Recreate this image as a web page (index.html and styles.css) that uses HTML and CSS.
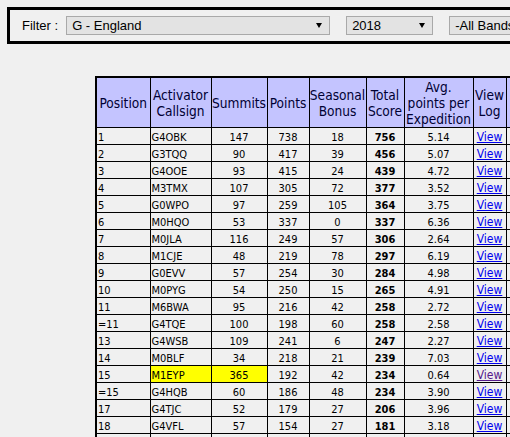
FILE: index.html
```html
<!DOCTYPE html>
<html>
<head>
<meta charset="utf-8">
<title>Activator Table</title>
<link rel="stylesheet" href="styles.css">
</head>
<body>
<div class="page">
  <div class="filter">
    <span class="filter-label">Filter :</span>
    <div class="select select-assoc"><span>G - England</span><svg class="arrow" width="6" height="5" viewBox="0 0 6 5"><path d="M0 0H6L3 5Z" fill="#000"/></svg></div>
    <div class="select select-year"><span>2018</span><svg class="arrow" width="6" height="5" viewBox="0 0 6 5"><path d="M0 0H6L3 5Z" fill="#000"/></svg></div>
    <div class="select select-band"><span>-All Bands-</span><svg class="arrow" width="6" height="5" viewBox="0 0 6 5"><path d="M0 0H6L3 5Z" fill="#000"/></svg></div>
  </div>

  <table class="league">
    <colgroup>
      <col class="c-pos"><col class="c-call"><col class="c-sum"><col class="c-pts"><col class="c-bonus"><col class="c-total"><col class="c-avg"><col class="c-view"><col class="c-extra">
    </colgroup>
    <thead>
      <tr>
        <th>Position</th>
        <th>Activator<br>Callsign</th>
        <th>Summits</th>
        <th>Points</th>
        <th>Seasonal<br>Bonus</th>
        <th>Total<br>Score</th>
        <th>Avg.<br>points per<br>Expedition</th>
        <th>View<br>Log</th>
        <th></th>
      </tr>
    </thead>
    <tbody>
      <tr><td class="l">1</td><td class="l">G4OBK</td><td>147</td><td>738</td><td>18</td><td class="b">756</td><td>5.14</td><td><a href="#">View</a></td><td></td></tr>
      <tr><td class="l">2</td><td class="l">G3TQQ</td><td>90</td><td>417</td><td>39</td><td class="b">456</td><td>5.07</td><td><a href="#">View</a></td><td></td></tr>
      <tr><td class="l">3</td><td class="l">G4OOE</td><td>93</td><td>415</td><td>24</td><td class="b">439</td><td>4.72</td><td><a href="#">View</a></td><td></td></tr>
      <tr><td class="l">4</td><td class="l">M3TMX</td><td>107</td><td>305</td><td>72</td><td class="b">377</td><td>3.52</td><td><a href="#">View</a></td><td></td></tr>
      <tr><td class="l">5</td><td class="l">G0WPO</td><td>97</td><td>259</td><td>105</td><td class="b">364</td><td>3.75</td><td><a href="#">View</a></td><td></td></tr>
      <tr><td class="l">6</td><td class="l">M0HQO</td><td>53</td><td>337</td><td>0</td><td class="b">337</td><td>6.36</td><td><a href="#">View</a></td><td></td></tr>
      <tr><td class="l">7</td><td class="l">M0JLA</td><td>116</td><td>249</td><td>57</td><td class="b">306</td><td>2.64</td><td><a href="#">View</a></td><td></td></tr>
      <tr><td class="l">8</td><td class="l">M1CJE</td><td>48</td><td>219</td><td>78</td><td class="b">297</td><td>6.19</td><td><a href="#">View</a></td><td></td></tr>
      <tr><td class="l">9</td><td class="l">G0EVV</td><td>57</td><td>254</td><td>30</td><td class="b">284</td><td>4.98</td><td><a href="#">View</a></td><td></td></tr>
      <tr><td class="l">10</td><td class="l">M0PYG</td><td>54</td><td>250</td><td>15</td><td class="b">265</td><td>4.91</td><td><a href="#">View</a></td><td></td></tr>
      <tr><td class="l">11</td><td class="l">M6BWA</td><td>95</td><td>216</td><td>42</td><td class="b">258</td><td>2.72</td><td><a href="#">View</a></td><td></td></tr>
      <tr><td class="l">=11</td><td class="l">G4TQE</td><td>100</td><td>198</td><td>60</td><td class="b">258</td><td>2.58</td><td><a href="#">View</a></td><td></td></tr>
      <tr><td class="l">13</td><td class="l">G4WSB</td><td>109</td><td>241</td><td>6</td><td class="b">247</td><td>2.27</td><td><a href="#">View</a></td><td></td></tr>
      <tr><td class="l">14</td><td class="l">M0BLF</td><td>34</td><td>218</td><td>21</td><td class="b">239</td><td>7.03</td><td><a href="#">View</a></td><td></td></tr>
      <tr><td class="l">15</td><td class="l hl">M1EYP</td><td class="hl">365</td><td>192</td><td>42</td><td class="b">234</td><td>0.64</td><td><a href="#" class="visited">View</a></td><td></td></tr>
      <tr><td class="l">=15</td><td class="l">G4HQB</td><td>60</td><td>186</td><td>48</td><td class="b">234</td><td>3.90</td><td><a href="#">View</a></td><td></td></tr>
      <tr><td class="l">17</td><td class="l">G4TJC</td><td>52</td><td>179</td><td>27</td><td class="b">206</td><td>3.96</td><td><a href="#">View</a></td><td></td></tr>
      <tr><td class="l">18</td><td class="l">G4VFL</td><td>57</td><td>154</td><td>27</td><td class="b">181</td><td>3.18</td><td><a href="#">View</a></td><td></td></tr>
      <tr><td class="l">&nbsp;</td><td class="l">&nbsp;</td><td>&nbsp;</td><td>&nbsp;</td><td>&nbsp;</td><td>&nbsp;</td><td>&nbsp;</td><td>&nbsp;</td><td>&nbsp;</td></tr>
    </tbody>
  </table>
</div>
</body>
</html>
```

FILE: styles.css
```css
html, body {
  margin: 0;
  padding: 0;
  background: #f0f0f0;
  overflow: hidden;
}

.page {
  width: 700px;
  padding: 7px 0 0 7px;
}

.filter {
  display: flex;
  align-items: center;
  border: 3px solid #000;
  padding: 6px 0 6px 12px;
  font-family: "Liberation Sans", Arial, sans-serif;
  font-size: 13px;
  color: #000;
}

.filter-label {
  margin-right: 8px;
}

.select {
  box-sizing: border-box;
  height: 19px;
  display: flex;
  align-items: center;
  justify-content: space-between;
  border: 1px solid #a9a9a9;
  background: #e3e3e3;
  padding: 0 7px 0 5px;
  margin-right: 16px;
  white-space: nowrap;
}

.select-assoc { width: 264px; }
.select-year { width: 87px; }
.select-band { width: 120px; }

.arrow {
  flex: none;
  display: block;
}

.league {
  margin: 32px 0 0 88px;
  border-collapse: collapse;
  border: 2px solid #000;
  table-layout: fixed;
  font-family: "DejaVu Sans Condensed", "DejaVu Sans", sans-serif;
  font-stretch: condensed;
}

.c-pos { width: 54px; }
.c-call { width: 61px; }
.c-sum { width: 56px; }
.c-pts { width: 42px; }
.c-bonus { width: 57px; }
.c-total { width: 38px; }
.c-avg { width: 69px; }
.c-view { width: 33px; }
.c-extra { width: 60px; }

.league th {
  background: #c4c4ff;
  color: #000033;
  font-weight: normal;
  font-size: 13.6px;
  line-height: 16px;
  padding: 1px 0 0;
  border: 1px solid #000;
  text-align: center;
  vertical-align: middle;
  white-space: nowrap;
}

.league td {
  font-size: 11px;
  line-height: 13px;
  padding: 3px 1px 0;
  border: 1px solid #000;
  text-align: center;
  color: #000;
  white-space: nowrap;
  overflow: hidden;
}

.league td.l { text-align: left; }
.league td.b { font-weight: bold; }
.league td.hl { background: #ffff00; }

.league a {
  color: #0000ee;
  font-size: 12px;
  line-height: 13px;
  text-decoration: underline;
}

.league a.visited { color: #551a8b; }
```
